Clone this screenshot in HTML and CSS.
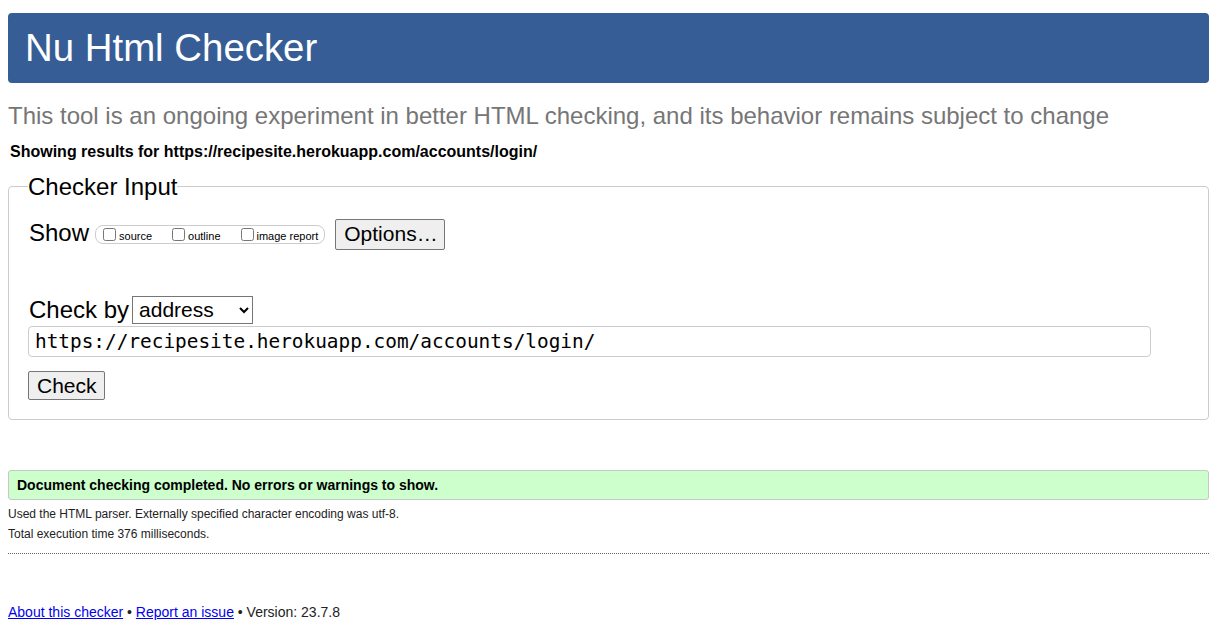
FILE: index.html
```html
<!DOCTYPE html>
<html lang="en">
<head>
<meta charset="utf-8">
<title>Showing results for https://recipesite.herokuapp.com/accounts/login/ - Nu Html Checker</title>
<link rel="stylesheet" href="styles.css">
</head>
<body>
<h1 class="title">Nu Html Checker</h1>
<p class="subtitle">This tool is an ongoing experiment in better HTML checking, and its behavior remains subject to change</p>
<p class="results-for">Showing results for https://recipesite.herokuapp.com/accounts/login/</p>
<form class="checker-form">
  <fieldset class="checker-input">
    <legend class="legend">Checker Input</legend>
    <div class="show-row">
      <span class="show-label">Show</span>
      <fieldset class="show-options">
        <label class="opt"><input type="checkbox" class="cb"><span>source</span></label>
        <label class="opt"><input type="checkbox" class="cb"><span>outline</span></label>
        <label class="opt"><input type="checkbox" class="cb"><span>image report</span></label>
      </fieldset>
      <button type="button" class="btn btn-options">Options…</button>
    </div>
    <div class="checkby-row">
      <label class="checkby-label">Check by</label>
      <select class="select">
        <option>address</option>
      </select>
    </div>
    <input class="url" type="url" value="https://recipesite.herokuapp.com/accounts/login/">
    <div class="submit-row">
      <button type="button" class="btn btn-check">Check</button>
    </div>
  </fieldset>
</form>
<div class="success">Document checking completed. No errors or warnings to show.</div>
<p class="details">Used the HTML parser. Externally specified character encoding was utf-8.</p>
<p class="details">Total execution time 376 milliseconds.</p>
<hr class="sep">
<p class="footer"><a href="#">About this checker</a> • <a href="#">Report an issue</a> • Version: 23.7.8</p>
</body>
</html>
```
FILE: styles.css
```css
html, body {
  background: #fff;
}
body {
  margin: 8px;
  font-family: "Liberation Sans", Arial, sans-serif;
  color: #000;
}
.title {
  margin: 5px 0 0;
  height: 70px;
  line-height: 70px;
  padding: 0 17px;
  background: #365d95;
  color: #fff;
  font-size: 38.4px;
  font-weight: normal;
  border-radius: 4px;
}
.subtitle {
  margin: 19px 0 0;
  font-size: 24px;
  line-height: 27px;
  color: #767676;
}
.results-for {
  margin: 14px 0 0 2px;
  font-size: 16px;
  line-height: 18px;
  font-weight: bold;
}
.checker-form {
  margin: 12px 0 0;
}
.checker-input {
  margin: 0;
  padding: 19px 20px 19px 20px;
  border: 1px solid #ccc;
  border-radius: 4px;
  min-width: 0;
}
.legend {
  padding: 0;
  margin-left: -1px;
  font-size: 24px;
  line-height: 27px;
  color: #000;
}
.show-row {
  display: flex;
  align-items: center;
  height: 30px;
}
.show-label {
  font-size: 24px;
  margin-right: 6px;
  position: relative;
  top: -1px;
}
.show-options {
  display: flex;
  align-items: center;
  margin: 0 10px 0 0;
  padding: 0 6px 0 4px;
  height: 17px;
  border: 1px solid #ccc;
  border-radius: 8px;
  min-width: 0;
}
.opt {
  display: flex;
  align-items: center;
  font-size: 11px;
  margin-right: 17px;
}
.opt:last-child {
  margin-right: 0;
}
.cb {
  width: 13px;
  height: 13px;
  margin: 0 3px 0 3px;
}
.opt span {
  position: relative;
  top: 2px;
}
.btn {
  font-family: "Liberation Sans", Arial, sans-serif;
  font-size: 21px;
  color: #000;
  background: #efefef;
  border: 1px solid #767676;
  border-radius: 2px;
  padding: 0 8px;
}
.btn-options {
  height: 31px;
  width: 110px;
}
.checkby-row {
  display: flex;
  align-items: center;
  margin-top: 47px;
  height: 27px;
}
.checkby-label {
  font-size: 24px;
  margin-right: 3px;
}
.select {
  font-family: "Liberation Sans", Arial, sans-serif;
  font-size: 21px;
  height: 28px;
  width: 121px;
  padding: 0 2px;
  border: 1px solid #767676;
  border-radius: 0;
  background: #fff;
  color: #000;
}
.url {
  display: block;
  box-sizing: border-box;
  margin: 3px 0 0 -1px;
  width: 1123px;
  height: 31px;
  padding: 0 6px;
  border: 1px solid #ccc;
  border-radius: 4px;
  font-family: "DejaVu Sans Mono", "Liberation Mono", monospace;
  font-size: 19.4px;
  color: #000;
}
.submit-row {
  margin-top: 14px;
  display: flex;
}
.btn-check {
  margin-left: -1px;
  height: 29px;
  width: 77px;
}
.success {
  margin-top: 50px;
  height: 30px;
  box-sizing: border-box;
  line-height: 28px;
  padding: 0 8px;
  background: #ccffcc;
  border: 1px solid #c8c8c8;
  border-radius: 3px;
  font-size: 14px;
  font-weight: bold;
}
.details {
  margin: 0;
  font-size: 12px;
  line-height: 20px;
  color: #222;
}
.success + .details {
  margin-top: 4px;
}
.sep {
  margin: 9px 0 0;
  border: 0;
  border-top: 1px dotted #666;
  height: 0;
}
.footer {
  margin: 50px 0 0;
  font-size: 14px;
  line-height: 17px;
  color: #222;
}
.footer a {
  color: #0000ee;
  text-decoration: underline;
}
```
